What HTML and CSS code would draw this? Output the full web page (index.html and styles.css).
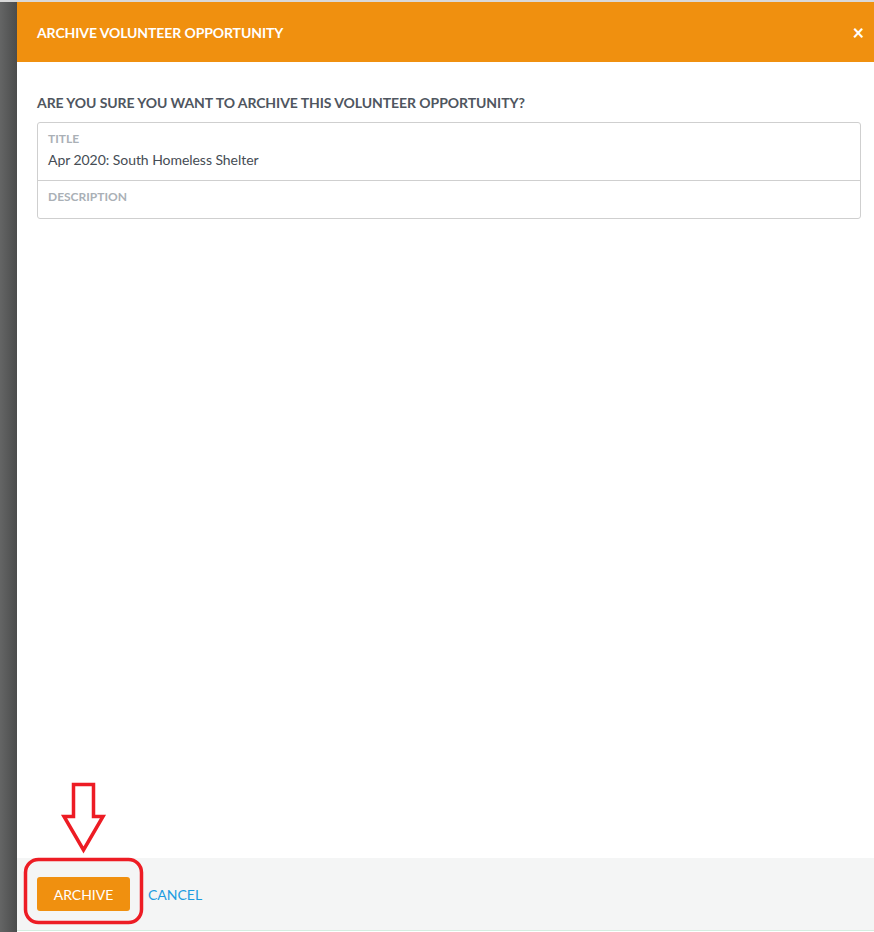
FILE: index.html
```html
<!DOCTYPE html>
<html lang="en">
<head>
    <meta charset="UTF-8">
    <meta name="viewport" content="width=device-width, initial-scale=1.0">
    <title>Archive Volunteer Opportunity</title>
    <link rel="stylesheet" href="styles.css">
</head>
<body>
    <div class="page">
        <div class="backdrop"></div>

        <div class="modal">
            <div class="modal-header">
                <h1>Archive Volunteer Opportunity</h1>
                <span class="close">&times;</span>
            </div>

            <div class="modal-body">
                <h2>Are you sure you want to archive this volunteer opportunity?</h2>
                <div class="detail-card">
                    <div class="detail-row">
                        <div class="detail-label">Title</div>
                        <div class="detail-value">Apr 2020: South Homeless Shelter</div>
                    </div>
                    <div class="detail-row">
                        <div class="detail-label">Description</div>
                    </div>
                </div>
            </div>

            <div class="modal-footer">
                <button class="archive-button">Archive</button>
                <a href="#" class="cancel-link">Cancel</a>
            </div>
        </div>
    </div>

    <!-- red markup drawn over the screenshot -->
    <svg class="markup" width="874" height="932" viewBox="0 0 874 932">
        <path d="M73.5 784.5 H93.5 V816.5 H103 L83.5 850 L64 816.5 H73.5 Z" fill="none" stroke="#ed1c24" stroke-width="3.5" stroke-linejoin="miter"/>
        <rect x="25.5" y="859.5" width="116" height="63" rx="13" fill="none" stroke="#ed1c24" stroke-width="3.5"/>
    </svg>
</body>
</html>
```

FILE: styles.css
```css
body {
    margin: 0;
    padding: 0;
    font-family: Lato, "Open Sans", sans-serif;
    background-color: #fff;
}

.page {
    display: flex;
    height: 932px;
    border-top: 2px solid #d9d9d9;
    box-sizing: border-box;
}

.backdrop {
    width: 17px;
    flex-shrink: 0;
    background: linear-gradient(to right, #646565, #4b4c4c);
}

.modal {
    flex: 1;
    display: flex;
    flex-direction: column;
    background-color: #fff;
}

.modal-header {
    height: 60px;
    background-color: #f0900f;
    display: flex;
    align-items: center;
    justify-content: space-between;
    padding: 0 10px 0 20px;
}

.modal-header h1 {
    margin: 0;
    color: #fff;
    font-size: 14px;
    font-weight: 700;
    letter-spacing: -0.1px;
    text-transform: uppercase;
}

.close {
    color: #fff;
    font-size: 20px;
    font-weight: 700;
    line-height: 1;
}

.modal-body {
    flex: 1;
    padding: 32px 13px 0 20px;
}

.modal-body h2 {
    margin: 0 0 11px;
    font-size: 14px;
    font-weight: 700;
    letter-spacing: -0.07px;
    color: #4f5660;
    text-transform: uppercase;
    line-height: 17px;
}

.detail-card {
    border: 1px solid #cfcfcf;
    border-radius: 3px;
}

.detail-row {
    padding: 9px 10px 11px;
}

.detail-row + .detail-row {
    border-top: 1px solid #cfcfcf;
    padding-bottom: 14px;
}

.detail-label {
    font-size: 12px;
    font-weight: 700;
    color: #aab0b6;
    text-transform: uppercase;
    line-height: 14px;
}

.detail-value {
    font-size: 14px;
    color: #454c54;
    line-height: 18px;
    margin-top: 5px;
    letter-spacing: -0.05px;
}

.modal-footer {
    height: 73px;
    background-color: #f4f5f5;
    border-bottom: 1px solid #d4ede0;
    display: flex;
    align-items: center;
    padding-left: 20px;
    gap: 18px;
    box-sizing: border-box;
    margin-bottom: 1px;
}

.archive-button {
    background-color: #f0900f;
    color: #fff;
    font-family: Lato, sans-serif;
    font-size: 14px;
    text-transform: uppercase;
    width: 93px;
    height: 34px;
    border: none;
    border-radius: 3px;
    cursor: pointer;
}

.cancel-link {
    color: #1c9ce0;
    font-size: 14px;
    text-transform: uppercase;
    text-decoration: none;
}

.markup {
    position: absolute;
    top: 0;
    left: 0;
    pointer-events: none;
}
```
